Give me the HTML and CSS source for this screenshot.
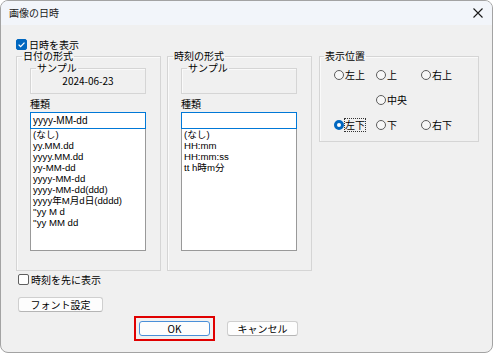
FILE: index.html
```html
<!DOCTYPE html>
<html lang="ja">
<head>
    <meta charset="UTF-8">
    <title>画像の日時</title>
    <link rel="stylesheet" href="styles.css">
</head>
<body>
<div class="dialog">
    <div class="titlebar">
        <span class="title">画像の日時</span>
        <svg class="close" width="10" height="10" viewBox="0 0 10 10">
            <path d="M0.5 0.5 L9.5 9.5 M9.5 0.5 L0.5 9.5" stroke="#1a1a1a" stroke-width="1.1" fill="none"/>
        </svg>
    </div>

    <div class="content">
        <div class="check top-check">
            <span class="box checked">
                <svg width="11" height="11" viewBox="0 0 11 11"><path d="M2.6 5.6 L4.6 7.6 L8.5 3.6" stroke="#fff" stroke-width="1.3" fill="none"/></svg>
            </span>
            <span>日時を表示</span>
        </div>

        <div class="groups">
            <fieldset class="group fmt">
                <legend>日付の形式</legend>
                <fieldset class="sample">
                    <legend>サンプル</legend>
                    <div class="sample-text">2024-06-23</div>
                </fieldset>
                <div class="kind-label">種類</div>
                <div class="textbox">yyyy-MM-dd</div>
                <ul class="listbox">
                    <li>(なし)</li>
                    <li>yy.MM.dd</li>
                    <li>yyyy.MM.dd</li>
                    <li>yy-MM-dd</li>
                    <li>yyyy-MM-dd</li>
                    <li>yyyy-MM-dd(ddd)</li>
                    <li>yyyy年M月d日(dddd)</li>
                    <li>&#39;&#39;yy M d</li>
                    <li>&#39;&#39;yy MM dd</li>
                </ul>
            </fieldset>

            <fieldset class="group fmt">
                <legend>時刻の形式</legend>
                <fieldset class="sample">
                    <legend>サンプル</legend>
                    <div class="sample-text">&nbsp;</div>
                </fieldset>
                <div class="kind-label">種類</div>
                <div class="textbox"></div>
                <ul class="listbox">
                    <li>(なし)</li>
                    <li>HH:mm</li>
                    <li>HH:mm:ss</li>
                    <li>tt h時m分</li>
                </ul>
            </fieldset>

            <fieldset class="group pos">
                <legend>表示位置</legend>
                <div class="radios">
                    <div class="radio"><span class="dot"></span>左上</div>
                    <div class="radio"><span class="dot"></span>上</div>
                    <div class="radio"><span class="dot"></span>右上</div>
                    <div></div>
                    <div class="radio"><span class="dot"></span>中央</div>
                    <div></div>
                    <div class="radio"><span class="dot on"></span><span class="focus">左下</span></div>
                    <div class="radio"><span class="dot"></span>下</div>
                    <div class="radio"><span class="dot"></span>右下</div>
                </div>
            </fieldset>
        </div>

        <div class="check bottom-check">
            <span class="box"></span>
            <span>時刻を先に表示</span>
        </div>

        <button class="btn font-btn">フォント設定</button>

        <div class="actions">
            <span class="highlight"><button class="btn default">OK</button></span>
            <button class="btn">キャンセル</button>
        </div>
    </div>
</div>
</body>
</html>
```

FILE: styles.css
```css
body {
    margin: 0;
    background-color: #ffffff;
    font-family: "Noto Sans CJK JP", "Noto Sans", sans-serif;
    font-size: 10px;
    color: #000000;
}
.dialog {
    width: 493px;
    height: 353px;
    box-sizing: border-box;
    border: 1px solid #a3a3a3;
    border-radius: 8px;
    background-color: #f0f0f0;
    overflow: hidden;
}
.titlebar {
    height: 24px;
    background-color: #f2f5fa;
    display: flex;
    align-items: center;
    justify-content: space-between;
    padding: 0 9px 0 8px;
}
.title {
    font-size: 10px;
    line-height: 12px;
    color: #1a1a1a;
}
.content {
    padding: 14px 0 0 15px;
}
.check {
    display: flex;
    align-items: center;
    gap: 2px;
    line-height: 11px;
    height: 11px;
}
.box {
    width: 11px;
    height: 11px;
    box-sizing: border-box;
    border: 1px solid #5f5f5f;
    border-radius: 2px;
    background-color: #ffffff;
    display: flex;
}
.box.checked {
    background-color: #0067c0;
    border-color: #0067c0;
}
.box.checked svg {
    margin: -1px;
}
.groups {
    display: flex;
    align-items: flex-start;
}
fieldset {
    margin: 0;
    min-width: 0;
    border: 1px solid #d5d5d5;
    box-shadow: inset 1px 1px 0 #fafafa;
}
legend {
    line-height: 12px;
    padding: 0 1px;
}
.group {
    box-sizing: border-box;
    padding: 0 14px 19px 13px;
}
.group legend {
    margin-left: -8px;
}
.fmt {
    width: 145px;
    margin-right: 6px;
}
.fmt + .fmt {
    margin-right: 7px;
}
.sample {
    padding: 0;
}
.sample .sample-legend,
.sample legend {
    margin-left: 5px;
}
.sample-text {
    font-size: 10px;
    line-height: 12px;
    padding: 1px 0 6px 0;
    text-align: center;
}
.kind-label {
    line-height: 12px;
    margin-top: 4px;
}
.textbox {
    margin-top: 2px;
    height: 17px;
    box-sizing: border-box;
    border: 1px solid #0078d7;
    background-color: #ffffff;
    padding-left: 2px;
    font-family: "Liberation Sans", "Noto Sans CJK JP", sans-serif;
    font-size: 10px;
    line-height: 15px;
}
.listbox {
    list-style: none;
    margin: 0;
    padding: 0 0 0 2px;
    height: 122px;
    box-sizing: border-box;
    border: 1px solid #999999;
    border-top: none;
    background-color: #ffffff;
    font-family: "Liberation Sans", "Noto Sans CJK JP", sans-serif;
    font-size: 9.6px;
}
.listbox li {
    line-height: 11px;
    height: 11px;
    white-space: nowrap;
}
.pos {
    width: 160px;
    padding: 0 4px 10px 14px;
}
.pos legend {
    margin-left: -10px;
}
.radios {
    display: grid;
    grid-template-columns: 42px 45px auto;
    row-gap: 13px;
    margin-top: 7px;
}
.radio {
    display: flex;
    align-items: center;
    gap: 1px;
    line-height: 12px;
}
.dot {
    width: 10px;
    height: 10px;
    box-sizing: border-box;
    border: 1px solid #5c5c5c;
    border-radius: 50%;
    background-color: #f7f7f7;
}
.dot.on {
    border: 3px solid #0067c0;
    background-color: #ffffff;
}
.focus {
    outline: 1px dotted #333333;
    outline-offset: 0;
}
.bottom-check {
    margin-top: 3px;
    padding-left: 2px;
}
.btn {
    font-family: "Noto Sans CJK JP", "Noto Sans", sans-serif;
    font-size: 10px;
    line-height: 13px;
    height: 15px;
    width: 71px;
    padding: 0;
    box-sizing: border-box;
    border: 1px solid #cfcfcf;
    border-bottom-color: #b5b5b5;
    border-radius: 3px;
    background-color: #fdfdfd;
    color: #000000;
}
.font-btn {
    display: block;
    width: 85px;
    margin: 12px 0 0 2px;
}
.actions {
    display: flex;
    align-items: center;
    gap: 12px;
    margin: 4px 0 0 118px;
}
.highlight {
    display: flex;
    border: 2px solid #e00000;
    padding: 3px;
}
.btn.default {
    border: 1px solid #4a8fd8;
}
```
